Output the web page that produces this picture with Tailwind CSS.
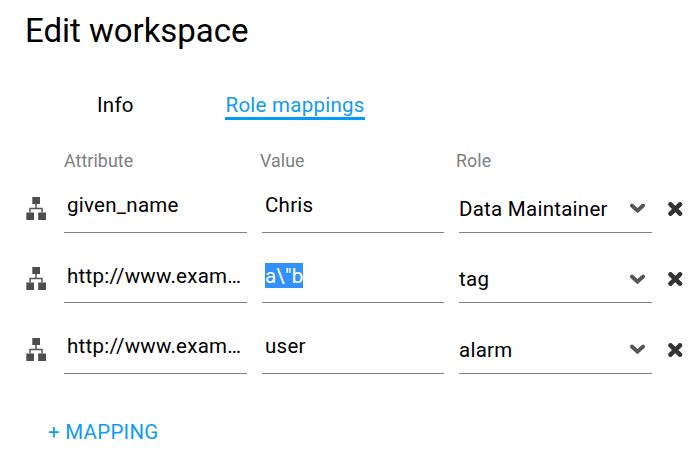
<!DOCTYPE html>
<html lang="en">
<head>
<meta charset="utf-8">
<title>Edit workspace</title>
<script src="https://cdn.jsdelivr.net/npm/@tailwindcss/browser@4"></script>
</head>
<body class="bg-white">
<svg class="hidden">
  <symbol id="tree" viewBox="0 0 20 23"><path fill="#4d4d4d" d="M6.300 0h7.700v7H6.300zM.3 15.500H8V23H.3zM12.200 15.500H20V23h-7.800z"/><path fill="none" stroke="#555" stroke-width="1.500" d="M10 7v4.500M4 15.500v-4h12v4"/></symbol>
  <symbol id="chevron" viewBox="0 0 16 11"><path fill="none" stroke="#555" stroke-width="3.800" stroke-linecap="round" stroke-linejoin="miter" d="M1.900 2.500 7.500 7.600l5.600-5.100"/></symbol>
  <symbol id="cross" viewBox="0 0 15 14"><path fill="none" stroke="#333" stroke-width="4.500" stroke-linecap="round" d="M2.500 2.300 12 11.700M12 2.300 2.500 11.700"/></symbol>
</svg>
<main class="w-[700px] h-[460px] overflow-hidden bg-white font-[Roboto,sans-serif] text-black text-[20.5px] tracking-[0.26px] whitespace-nowrap">
  <h1 class="h-[90px] pt-[11px] pl-[25px] text-[33px] leading-[40px] tracking-[-0.03px]">Edit workspace</h1>
  <nav class="flex h-[61px] pl-[97px] leading-[25px]">
    <a class="w-[128px] pt-[3px]">Info</a>
    <a class="h-[30px] w-[140px] pt-[3px] pl-[0.5px] border-b-3 border-[#039bf5] text-[#0f9bf5]">Role mappings</a>
  </nav>
  <div class="flex h-[19px] pl-[64px] text-[17.800px] leading-[20px] tracking-[0.08px] text-[#808080]">
    <span class="w-[196px]">Attribute</span><span class="w-[196px]">Value</span><span>Role</span>
  </div>
  <section class="leading-[24px]">
    <div class="flex h-[63px] pl-[26px]">
      <svg class="w-5 h-[23px] mt-[27px]"><use href="#tree"/></svg>
      <div class="ml-[18px] w-[183px] border-b border-[#808080] pl-[3px] pt-[23px]">given_name</div>
      <div class="ml-[15px] w-[182px] border-b border-[#808080] pl-[3px] pt-[23px]">Chris</div>
      <div class="ml-[15px] w-[193px] border-b border-[#808080] flex justify-between pr-[6px] pt-[27px]"><span>Data Maintainer</span><svg class="w-4 h-[11px] mt-[6px]"><use href="#chevron"/></svg></div>
      <svg class="ml-[16px] w-[15px] h-[14px] mt-[32px]"><use href="#cross"/></svg>
    </div>
    <div class="flex h-[70px] pl-[26px]">
      <svg class="w-5 h-[23px] mt-[34px]"><use href="#tree"/></svg>
      <div class="ml-[18px] w-[183px] border-b border-[#808080] pl-[3px] pt-[31px]">http://www.exam…</div>
      <div class="ml-[15px] w-[182px] border-b border-[#808080] pl-[3px] pt-[30px]"><span class="inline-block h-[25px] w-[38px] bg-[#3390ff] pt-px tracking-[0.2px] text-white">a\"b</span></div>
      <div class="ml-[15px] w-[193px] border-b border-[#808080] flex justify-between pr-[6px] pt-[34px]"><span>tag</span><svg class="w-4 h-[11px] mt-[7px]"><use href="#chevron"/></svg></div>
      <svg class="ml-[16px] w-[15px] h-[14px] mt-[39px]"><use href="#cross"/></svg>
    </div>
    <div class="flex h-[71px] pl-[26px]">
      <svg class="w-5 h-[23px] mt-[35px]"><use href="#tree"/></svg>
      <div class="ml-[18px] w-[183px] border-b border-[#808080] pl-[3px] pt-[31px]">http://www.exam…</div>
      <div class="ml-[15px] w-[182px] border-b border-[#808080] pl-[3px] pt-[31px]">user</div>
      <div class="ml-[15px] w-[193px] border-b border-[#808080] flex justify-between pr-[6px] pt-[35px]"><span>alarm</span><svg class="w-4 h-[11px] mt-[6px]"><use href="#chevron"/></svg></div>
      <svg class="ml-[16px] w-[15px] h-[14px] mt-[40px]"><use href="#cross"/></svg>
    </div>
  </section>
  <button class="mt-[46px] ml-[48px] block leading-[24px] tracking-[0.26px] text-[#0f9bf5]">+ MAPPING</button>
</main>
</body>
</html>
